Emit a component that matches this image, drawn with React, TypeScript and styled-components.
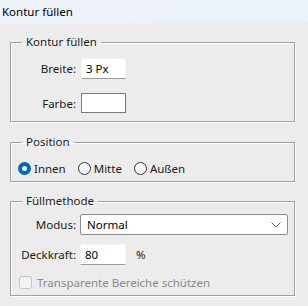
import React from "react";
import styled, { createGlobalStyle } from "styled-components";

const GlobalStyle = createGlobalStyle`
  html, body {
    margin: 0;
    padding: 0;
    background: #ececec;
  }
  body {
    font-family: "Noto Sans", "Open Sans", sans-serif;
    font-size: 11.5px;
    color: #1b1b1b;
  }
`;

const Dialog = styled.div`
  width: 308px;
  height: 306px;
  background: #ececec;
  overflow: hidden;
`;

const TitleBar = styled.div`
  height: 23px;
  line-height: 23px;
  padding-left: 2px;
  background: linear-gradient(to right, #eef3f9, #ecf2fb);
  color: #000;
`;

const Body = styled.div`
  display: flex;
  flex-direction: column;
  padding: 11px 13px 0 10px;
`;

const Group = styled.fieldset<{ $top?: number; $pt: number; $pb: number }>`
  margin: ${({ $top }) => $top || 0}px 0 0 0;
  padding: ${({ $pt }) => $pt}px 0 ${({ $pb }) => $pb}px 0;
  border: 1px solid #a0a0a0;
  box-shadow: 1px 1px 0 #fff, inset 1px 1px 0 #fff;
  min-width: 0;
`;

const Legend = styled.legend`
  margin-left: 11px;
  padding: 0 4px;
  line-height: 16px;
  color: #1b1b1b;
`;

const Rows = styled.div<{ $gap: number }>`
  display: flex;
  flex-direction: column;
  gap: ${({ $gap }) => $gap}px;
`;

const Row = styled.div<{ $gap: number }>`
  display: grid;
  grid-template-columns: 65px auto 1fr;
  column-gap: ${({ $gap }) => $gap}px;
  align-items: center;
`;

const Label = styled.span`
  text-align: right;
  white-space: nowrap;
`;

const TextBox = styled.input<{ $w: number }>`
  box-sizing: border-box;
  width: ${({ $w }) => $w}px;
  height: 21px;
  margin: 0;
  padding: 0 4px;
  border: 1px solid #f4f4f4;
  border-bottom-color: #9a9a9a;
  border-radius: 1px;
  background: #fff;
  font: inherit;
  color: #000;
  outline: none;
`;

const Swatch = styled.div`
  box-sizing: border-box;
  width: 45px;
  height: 20px;
  border: 1px solid #7a7a7a;
  background: #fff;
`;

const Select = styled.div`
  box-sizing: border-box;
  width: 208px;
  height: 21px;
  display: flex;
  align-items: center;
  justify-content: space-between;
  padding: 0 6px 0 6px;
  border: 1px solid #8b8b8b;
  border-radius: 2px;
  background: #fff;
  color: #000;
`;

const Unit = styled.span`
  padding-left: 6px;
`;

const RadioRow = styled.div`
  display: flex;
  align-items: center;
  gap: 12px;
  padding-left: 7px;
  height: 16px;
`;

const RadioItem = styled.label`
  display: flex;
  align-items: center;
  gap: 3px;
`;

const RadioDot = styled.span<{ $on?: boolean }>`
  box-sizing: border-box;
  width: 13px;
  height: 13px;
  border-radius: 50%;
  display: flex;
  align-items: center;
  justify-content: center;
  border: ${({ $on }) => ($on ? "none" : "1px solid #333")};
  background: ${({ $on }) => ($on ? "#0067c0" : "#f7f7f7")};
  &::after {
    content: "";
    display: ${({ $on }) => ($on ? "block" : "none")};
    width: 5px;
    height: 5px;
    border-radius: 50%;
    background: #fff;
  }
`;

const CheckRow = styled.div`
  display: flex;
  align-items: center;
  gap: 5px;
  padding-left: 8px;
  color: #8a8a8a;
  height: 16px;
`;

const CheckBox = styled.span`
  box-sizing: border-box;
  width: 13px;
  height: 13px;
  border: 1px solid #c4c4c4;
  border-radius: 3px;
  background: #f3f3f3;
`;

const Chevron = () => (
  <svg width="10" height="6" viewBox="0 0 10 6">
    <path d="M0.5 0.5 L5 5 L9.5 0.5" fill="none" stroke="#606060" strokeWidth="1" />
  </svg>
);

export default function App() {
  return (
    <Dialog>
      <GlobalStyle />
      <TitleBar>Kontur füllen</TitleBar>
      <Body>
        <Group $pt={8} $pb={8}>
          <Legend>Kontur füllen</Legend>
          <Rows $gap={14}>
            <Row $gap={5}>
              <Label>Breite:</Label>
              <TextBox $w={45} readOnly value="3 Px" />
            </Row>
            <Row $gap={5}>
              <Label>Farbe:</Label>
              <Swatch />
            </Row>
          </Rows>
        </Group>

        <Group $top={12} $pt={10} $pb={5}>
          <Legend>Position</Legend>
          <RadioRow>
            <RadioItem>
              <RadioDot $on />
              Innen
            </RadioItem>
            <RadioItem>
              <RadioDot />
              Mitte
            </RadioItem>
            <RadioItem>
              <RadioDot />
              Außen
            </RadioItem>
          </RadioRow>
        </Group>

        <Group $top={11} $pt={5} $pb={5}>
          <Legend>Füllmethode</Legend>
          <Rows $gap={9}>
            <Row $gap={4}>
              <Label>Modus:</Label>
              <Select>
                Normal
                <Chevron />
              </Select>
            </Row>
            <Row $gap={4}>
              <Label>Deckkraft:</Label>
              <TextBox $w={46} readOnly value="80" />
              <Unit>%</Unit>
            </Row>
            <CheckRow>
              <CheckBox />
              Transparente Bereiche schützen
            </CheckRow>
          </Rows>
        </Group>
      </Body>
    </Dialog>
  );
}
